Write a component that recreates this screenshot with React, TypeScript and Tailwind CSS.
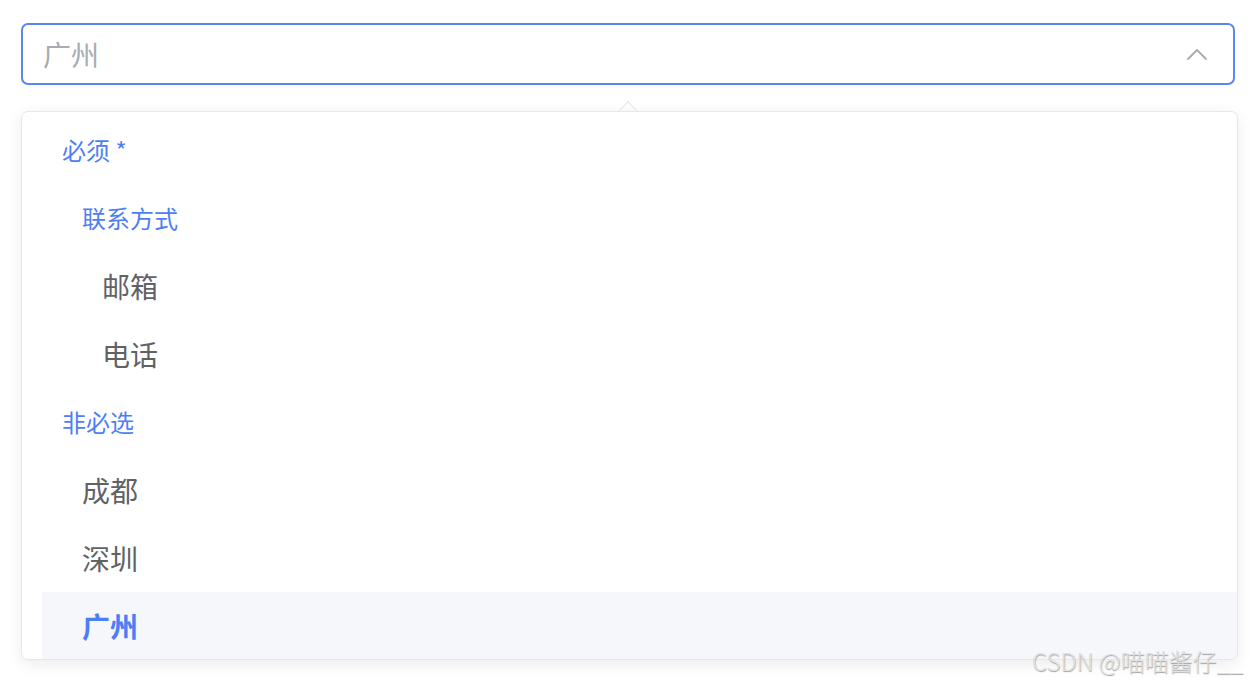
import React from 'react';

type Row = { label: string; kind: 'group' | 'item'; indent: number; selected?: boolean };

const rows: Row[] = [
  { label: '必须 *', kind: 'group', indent: 0 },
  { label: '联系方式', kind: 'group', indent: 1 },
  { label: '邮箱', kind: 'item', indent: 2 },
  { label: '电话', kind: 'item', indent: 2 },
  { label: '非必选', kind: 'group', indent: 0 },
  { label: '成都', kind: 'item', indent: 1 },
  { label: '深圳', kind: 'item', indent: 1 },
  { label: '广州', kind: 'item', indent: 1, selected: true },
];

const indentClass = ['pl-[40px]', 'pl-[60px]', 'pl-[80px]'];

const App: React.FC = () => {
  return (
    <div
      className="relative h-[684px] w-[1250px] overflow-hidden bg-white"
      style={{ fontFamily: '"Noto Sans CJK SC", "Noto Sans", sans-serif' }}
    >
      <div className="pl-[21px] pr-[15px] pt-[23px]">
        {/* Select input */}
        <div className="flex h-[62px] items-center justify-between rounded-[7px] border-2 border-[#5b86f2] pl-[20px] pr-[24px]">
          <span className="text-[28px] text-[#a8abb2]">广州</span>
          <svg width="24" height="14" viewBox="0 0 24 14" fill="none">
            <path d="M3 12 L12 3 L21 12" stroke="#a8abb2" strokeWidth="1.8" strokeLinecap="round" strokeLinejoin="round" />
          </svg>
        </div>

        {/* Dropdown */}
        <div className="relative mr-[-3px] mt-[26px]">
          <div className="absolute left-[600px] top-[-7px] h-[14px] w-[14px] rotate-45 border-l border-t border-[#e4e7ed] bg-white" />
          <div className="relative h-[549px] overflow-hidden rounded-[7px] border border-[#e4e7ed] bg-white pt-[4px] shadow-[0_4px_16px_rgba(0,0,0,0.08)]">
            {rows.map((r, i) => (
              <div
                key={i}
                className={
                  'flex h-[68px] items-center ' +
                  (r.selected ? 'ml-[20px] bg-[#f5f7fa] pl-[40px]' : indentClass[r.indent])
                }
              >
                {r.kind === 'group' ? (
                  <span className="text-[24px] text-[#4d7ef5]">{r.label}</span>
                ) : (
                  <span
                    className={
                      r.selected
                        ? 'text-[28px] font-bold text-[#4d7ef5]'
                        : 'text-[28px] text-[#606266]'
                    }
                  >
                    {r.label}
                  </span>
                )}
              </div>
            ))}
          </div>
        </div>
      </div>

      {/* Watermark */}
      <div
        className="absolute left-[1032px] top-[643px] text-[24px] font-light text-[#e2e2e2]"
        style={{ textShadow: '0.5px 0.5px 1px rgba(100,100,100,0.6)' }}
      >
        CSDN @喵喵酱仔__
      </div>
    </div>
  );
};

export default App;
